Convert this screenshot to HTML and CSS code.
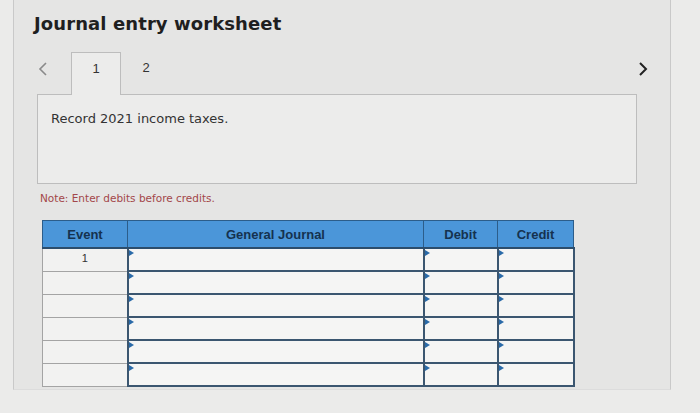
FILE: index.html
```html
<!DOCTYPE html>
<html>
<head>
<meta charset="utf-8">
<link rel="stylesheet" href="styles.css">
</head>
<body>
<div class="panel">
  <h1 class="title">Journal entry worksheet</h1>
  <div class="tabs">
    <span class="arrow prev">
      <svg width="10" height="16" viewBox="0 0 10 16"><path d="M8 2 L2 8 L8 14" fill="none" stroke="#8a8a8a" stroke-width="1.6"/></svg>
    </span>
    <span class="tab active">1</span>
    <span class="tab">2</span>
    <span class="arrow next">
      <svg width="10" height="16" viewBox="0 0 10 16"><path d="M2 2 L8 8 L2 14" fill="none" stroke="#222" stroke-width="2"/></svg>
    </span>
  </div>
  <div class="box">Record 2021 income taxes.</div>
  <p class="note">Note: Enter debits before credits.</p>
  <table class="journal">
    <thead>
      <tr>
        <th class="c-event">Event</th>
        <th class="c-gj">General Journal</th>
        <th class="c-dr">Debit</th>
        <th class="c-cr">Credit</th>
      </tr>
    </thead>
    <tbody>
      <tr><td class="ev">1</td><td class="in"></td><td class="in"></td><td class="in"></td></tr>
      <tr><td class="ev"></td><td class="in"></td><td class="in"></td><td class="in"></td></tr>
      <tr><td class="ev"></td><td class="in"></td><td class="in"></td><td class="in"></td></tr>
      <tr><td class="ev"></td><td class="in"></td><td class="in"></td><td class="in"></td></tr>
      <tr><td class="ev"></td><td class="in"></td><td class="in"></td><td class="in"></td></tr>
      <tr><td class="ev"></td><td class="in"></td><td class="in"></td><td class="in"></td></tr>
    </tbody>
  </table>
</div>
</body>
</html>
```
FILE: styles.css
```css
html, body {
  margin: 0;
  padding: 0;
  background: #ebebea;
  width: 700px;
  height: 413px;
  overflow: hidden;
  font-family: "DejaVu Sans", Verdana, sans-serif;
}
.panel {
  margin-left: 13px;
  width: 658px;
  height: 390px;
  box-sizing: border-box;
  border-left: 1px solid #c9c9c9;
  border-right: 1px solid #c9c9c9;
  border-bottom: 1px solid #dcdcdc;
  background: #e5e5e4;
}
.title {
  margin: 0;
  padding: 12px 0 0 20px;
  font-size: 18px;
  font-weight: bold;
  color: #1f1f1f;
  line-height: 24px;
  letter-spacing: 0.1px;
}
.tabs {
  display: flex;
  align-items: stretch;
  margin-top: 16px;
  height: 42px;
  position: relative;
  z-index: 1;
}
.arrow {
  display: flex;
  align-items: center;
  height: 34px;
}
.prev {
  margin-left: 24px;
  width: 33px;
}
.tab {
  width: 50px;
  box-sizing: border-box;
  text-align: center;
  font-size: 13px;
  color: #333;
  padding-top: 8px;
  font-family: "Liberation Sans", Arial, sans-serif;
}
.tab.active {
  border: 1px solid #bdbdbd;
  border-bottom: none;
  background: #ececeb;
  height: 43px;
}
.next {
  margin-left: 467px;
}
.box {
  margin-left: 23px;
  width: 600px;
  height: 90px;
  box-sizing: border-box;
  border: 1px solid #bdbdbd;
  background: #ececeb;
  padding: 16px 0 0 13px;
  font-size: 13px;
  color: #333;
}
.note {
  margin: 7px 0 0 26px;
  font-size: 10.5px;
  color: #a3474a;
  line-height: 14px;
  height: 14px;
}
.journal {
  margin: 15px 0 0 28px;
  border-collapse: collapse;
  table-layout: fixed;
  font-family: "Liberation Sans", Arial, sans-serif;
}
.journal th {
  background: #4b96d9;
  color: #15324f;
  font-size: 13px;
  font-weight: bold;
  height: 26px;
  padding: 0;
  border: 1px solid #2c5d8a;
  border-bottom: 2px solid #2c4d6c;
}
.c-event { width: 84px; }
.c-gj { width: 295px; }
.c-dr { width: 73px; }
.c-cr { width: 75px; }
.journal td {
  height: 21px;
  padding: 0;
  position: relative;
}
.journal td.ev {
  border: 1px solid #a4a4a4;
  background: #f2f2f1;
  text-align: center;
  vertical-align: top;
  font-size: 11px;
  color: #333;
  padding-top: 3px;
  height: 18px;
}
.journal td.in {
  border: 2px solid #3b5670;
  background: #f5f5f4;
}
.journal td.in::before {
  content: "";
  position: absolute;
  left: 0;
  top: 1px;
  border-left: 5px solid #2a6aa8;
  border-top: 3px solid transparent;
  border-bottom: 3px solid transparent;
}
```
